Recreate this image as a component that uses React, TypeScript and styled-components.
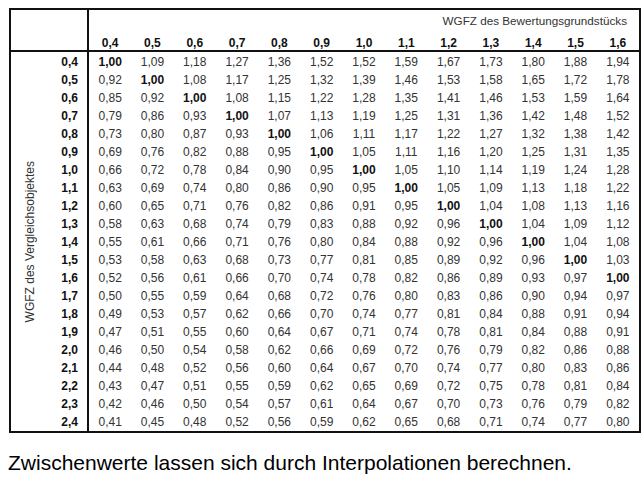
import React from 'react';
import styled, { createGlobalStyle } from 'styled-components';

const GlobalStyle = createGlobalStyle`
  html, body {
    margin: 0;
    padding: 0;
    background: #ffffff;
    overflow: hidden;
  }
  body {
    font-family: "Liberation Sans", Arial, sans-serif;
  }
  * {
    box-sizing: border-box;
  }
`;

const COLUMNS = ['0,4', '0,5', '0,6', '0,7', '0,8', '0,9', '1,0', '1,1', '1,2', '1,3', '1,4', '1,5', '1,6'];

const ROWS: [string, string[]][] = [
  ['0,4', ['1,00', '1,09', '1,18', '1,27', '1,36', '1,52', '1,52', '1,59', '1,67', '1,73', '1,80', '1,88', '1,94']],
  ['0,5', ['0,92', '1,00', '1,08', '1,17', '1,25', '1,32', '1,39', '1,46', '1,53', '1,58', '1,65', '1,72', '1,78']],
  ['0,6', ['0,85', '0,92', '1,00', '1,08', '1,15', '1,22', '1,28', '1,35', '1,41', '1,46', '1,53', '1,59', '1,64']],
  ['0,7', ['0,79', '0,86', '0,93', '1,00', '1,07', '1,13', '1,19', '1,25', '1,31', '1,36', '1,42', '1,48', '1,52']],
  ['0,8', ['0,73', '0,80', '0,87', '0,93', '1,00', '1,06', '1,11', '1,17', '1,22', '1,27', '1,32', '1,38', '1,42']],
  ['0,9', ['0,69', '0,76', '0,82', '0,88', '0,95', '1,00', '1,05', '1,11', '1,16', '1,20', '1,25', '1,31', '1,35']],
  ['1,0', ['0,66', '0,72', '0,78', '0,84', '0,90', '0,95', '1,00', '1,05', '1,10', '1,14', '1,19', '1,24', '1,28']],
  ['1,1', ['0,63', '0,69', '0,74', '0,80', '0,86', '0,90', '0,95', '1,00', '1,05', '1,09', '1,13', '1,18', '1,22']],
  ['1,2', ['0,60', '0,65', '0,71', '0,76', '0,82', '0,86', '0,91', '0,95', '1,00', '1,04', '1,08', '1,13', '1,16']],
  ['1,3', ['0,58', '0,63', '0,68', '0,74', '0,79', '0,83', '0,88', '0,92', '0,96', '1,00', '1,04', '1,09', '1,12']],
  ['1,4', ['0,55', '0,61', '0,66', '0,71', '0,76', '0,80', '0,84', '0,88', '0,92', '0,96', '1,00', '1,04', '1,08']],
  ['1,5', ['0,53', '0,58', '0,63', '0,68', '0,73', '0,77', '0,81', '0,85', '0,89', '0,92', '0,96', '1,00', '1,03']],
  ['1,6', ['0,52', '0,56', '0,61', '0,66', '0,70', '0,74', '0,78', '0,82', '0,86', '0,89', '0,93', '0,97', '1,00']],
  ['1,7', ['0,50', '0,55', '0,59', '0,64', '0,68', '0,72', '0,76', '0,80', '0,83', '0,86', '0,90', '0,94', '0,97']],
  ['1,8', ['0,49', '0,53', '0,57', '0,62', '0,66', '0,70', '0,74', '0,77', '0,81', '0,84', '0,88', '0,91', '0,94']],
  ['1,9', ['0,47', '0,51', '0,55', '0,60', '0,64', '0,67', '0,71', '0,74', '0,78', '0,81', '0,84', '0,88', '0,91']],
  ['2,0', ['0,46', '0,50', '0,54', '0,58', '0,62', '0,66', '0,69', '0,72', '0,76', '0,79', '0,82', '0,86', '0,88']],
  ['2,1', ['0,44', '0,48', '0,52', '0,56', '0,60', '0,64', '0,67', '0,70', '0,74', '0,77', '0,80', '0,83', '0,86']],
  ['2,2', ['0,43', '0,47', '0,51', '0,55', '0,59', '0,62', '0,65', '0,69', '0,72', '0,75', '0,78', '0,81', '0,84']],
  ['2,3', ['0,42', '0,46', '0,50', '0,54', '0,57', '0,61', '0,64', '0,67', '0,70', '0,73', '0,76', '0,79', '0,82']],
  ['2,4', ['0,41', '0,45', '0,48', '0,52', '0,56', '0,59', '0,62', '0,65', '0,68', '0,71', '0,74', '0,77', '0,80']],
];

const Page = styled.div`
  padding: 8px 0 0 9px;
`;

const Frame = styled.div`
  width: 632px;
  border: 2px solid #111;
  display: grid;
  grid-template-columns: 78px 1fr;
  grid-template-rows: 42px auto;
  font-size: 12px;
  color: #333;
`;

const Corner = styled.div`
  border-right: 2px solid #111;
  border-bottom: 2px solid #111;
`;

const Header = styled.div`
  border-bottom: 2px solid #111;
  display: flex;
  flex-direction: column;
  padding-top: 4px;
`;

const AxisTitle = styled.div`
  text-align: right;
  padding-right: 12px;
  font-size: 11.7px;
  line-height: 14px;
  color: #333;
`;

const ColumnHeads = styled.div`
  margin-top: 8px;
  display: grid;
  grid-template-columns: repeat(13, 1fr);
  line-height: 14px;
`;

const HeadCell = styled.div`
  text-align: center;
  font-weight: bold;
  color: #111;
`;

const Side = styled.div`
  border-right: 2px solid #111;
  display: flex;
`;

const VerticalBox = styled.div`
  width: 38px;
  display: flex;
  align-items: center;
  justify-content: center;
`;

const VerticalText = styled.div`
  writing-mode: vertical-rl;
  transform: rotate(180deg);
  white-space: nowrap;
  line-height: 14px;
  color: #333;
`;

const RowLabels = styled.div`
  flex: 1;
  padding: 1px 9px 0 0;
  display: grid;
  grid-auto-rows: 18px;
`;

const RowLabel = styled.div`
  text-align: right;
  font-weight: bold;
  color: #111;
  line-height: 18px;
`;

const Body = styled.div`
  padding-top: 1px;
  display: grid;
  grid-template-columns: repeat(13, 1fr);
  grid-auto-rows: 18px;
`;

const Cell = styled.div<{ $diagonal: boolean }>`
  text-align: center;
  line-height: 18px;
  font-weight: ${(p) => (p.$diagonal ? 'bold' : 'normal')};
  color: ${(p) => (p.$diagonal ? '#111' : '#333')};
`;

const Note = styled.p`
  margin: 18px 0 0 -1px;
  font-size: 21px;
  line-height: 24px;
  color: #000;
`;

export default function App() {
  return (
    <>
      <GlobalStyle />
      <Page>
        <Frame>
          <Corner />
          <Header>
            <AxisTitle>WGFZ des Bewertungsgrundstücks</AxisTitle>
            <ColumnHeads>
              {COLUMNS.map((c) => (
                <HeadCell key={c}>{c}</HeadCell>
              ))}
            </ColumnHeads>
          </Header>
          <Side>
            <VerticalBox>
              <VerticalText>WGFZ des Vergleichsobjektes</VerticalText>
            </VerticalBox>
            <RowLabels>
              {ROWS.map(([label]) => (
                <RowLabel key={label}>{label}</RowLabel>
              ))}
            </RowLabels>
          </Side>
          <Body>
            {ROWS.map(([label, values]) =>
              values.map((v, j) => (
                <Cell key={label + '-' + j} $diagonal={COLUMNS[j] === label}>
                  {v}
                </Cell>
              ))
            )}
          </Body>
        </Frame>
        <Note>Zwischenwerte lassen sich durch Interpolationen berechnen.</Note>
      </Page>
    </>
  );
}
